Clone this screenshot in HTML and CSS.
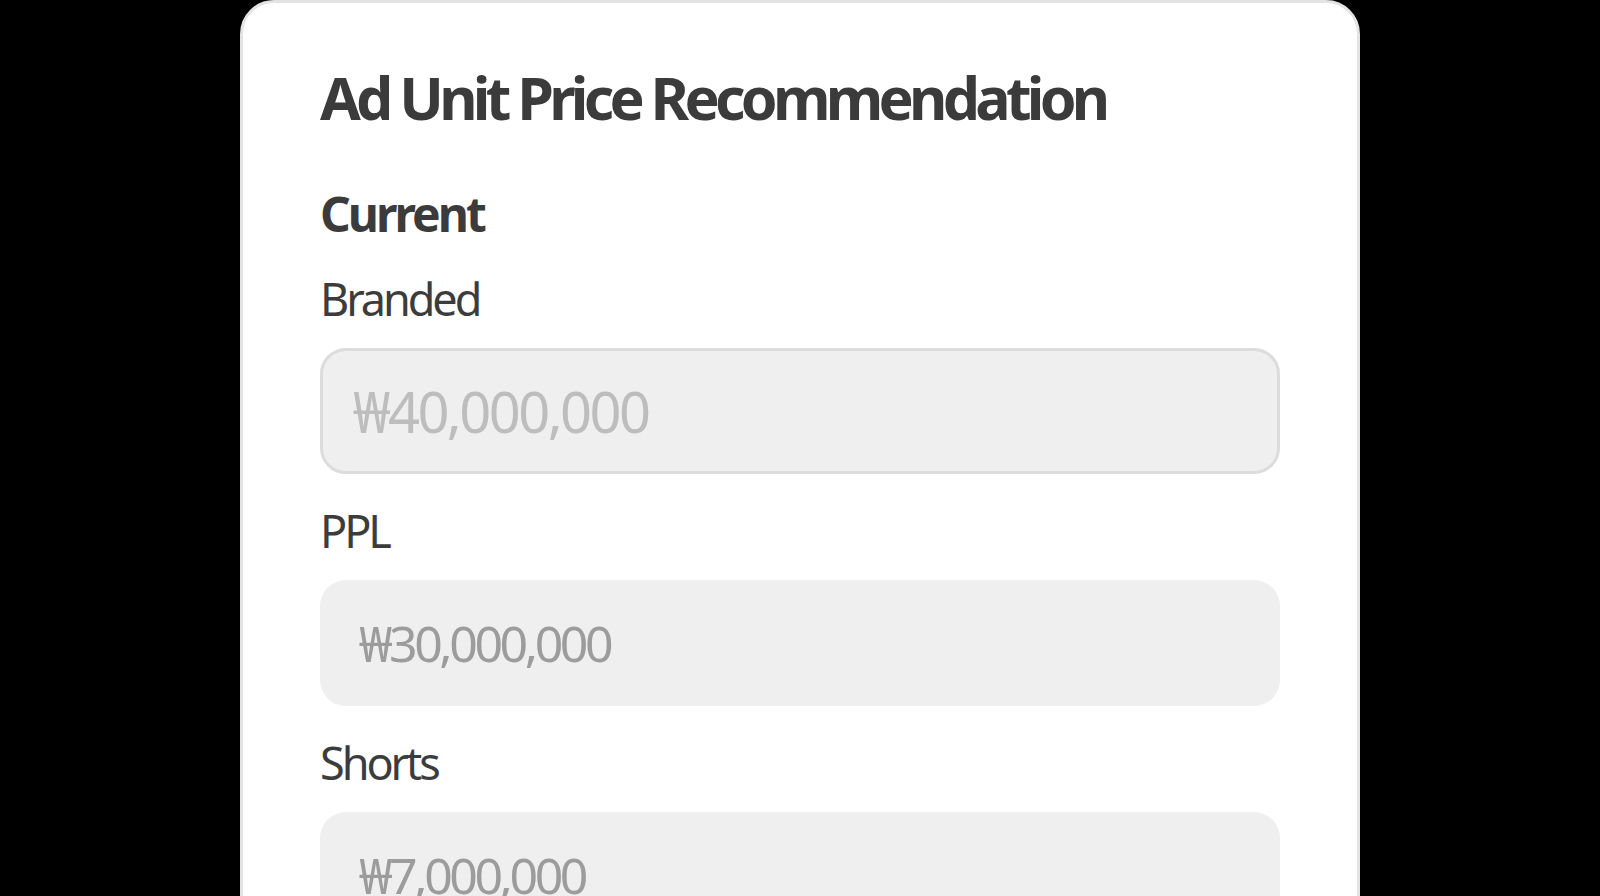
FILE: index.html
```html
<!DOCTYPE html>
<html>
    <head>
        <meta charset="utf-8">
        <link rel="stylesheet" href="styles.css">
    </head>
<body>
    <div class="card">
        <h1 class="title">Ad Unit Price Recommendation</h1>
        <h2 class="section">Current</h2>

        <div class="group">
            <label class="label" for="branded">Branded</label>
            <input class="field fieldActive" id="branded" type="text" value="₩40,000,000" readonly>
        </div>
        <div class="group">
            <label class="label" for="ppl">PPL</label>
            <input class="field" id="ppl" type="text" value="₩30,000,000" readonly>
        </div>
        <div class="group">
            <label class="label" for="shorts">Shorts</label>
            <input class="field" id="shorts" type="text" value="₩7,000,000" readonly>
        </div>
    </div>
</body>
</html>
```

FILE: styles.css
```css
html, body {
    height: 100%;
    overflow: hidden;
}

body {
    margin: 0;
    background-color: #000;
    font-family: "Noto Sans", "Open Sans", "Noto Sans CJK KR", sans-serif;
    color: #3a3a3a;
}

.card {
    box-sizing: border-box;
    width: 1120px;
    min-height: 1100px;
    margin: 0 auto;
    padding: 54px 77px 0;
    background-color: #fff;
    border: 3px solid #e3e3e3;
    border-radius: 34px;
}

.title {
    margin: 0 0 45px;
    font-size: 59px;
    line-height: 80px;
    font-weight: 700;
    letter-spacing: -0.08em;
    color: #3b3b3b;
}

.section {
    margin: 0 0 23px;
    font-size: 48px;
    line-height: 64px;
    font-weight: 700;
    letter-spacing: -0.062em;
    color: #3b3b3b;
}

.group {
    display: flex;
    flex-direction: column;
    margin-bottom: 27px;
}

.label {
    margin-bottom: 19px;
    font-size: 45px;
    line-height: 60px;
    letter-spacing: -0.068em;
    color: #3c3c3c;
}

.field {
    box-sizing: border-box;
    width: 960px;
    height: 126px;
    padding: 0 0 0 39px;
    border: 0;
    border-radius: 26px;
    background-color: #efefef;
    font-family: "Noto Sans", "Open Sans", "Noto Sans CJK KR", sans-serif;
    font-size: 50px;
    letter-spacing: -0.069em;
    color: #9c9c9c;
    outline: none;
}

.fieldActive {
    padding-left: 30px;
    border: 3px solid #dcdcdc;
    font-size: 56px;
    letter-spacing: -0.046em;
    color: #bdbdbd;
}
```
